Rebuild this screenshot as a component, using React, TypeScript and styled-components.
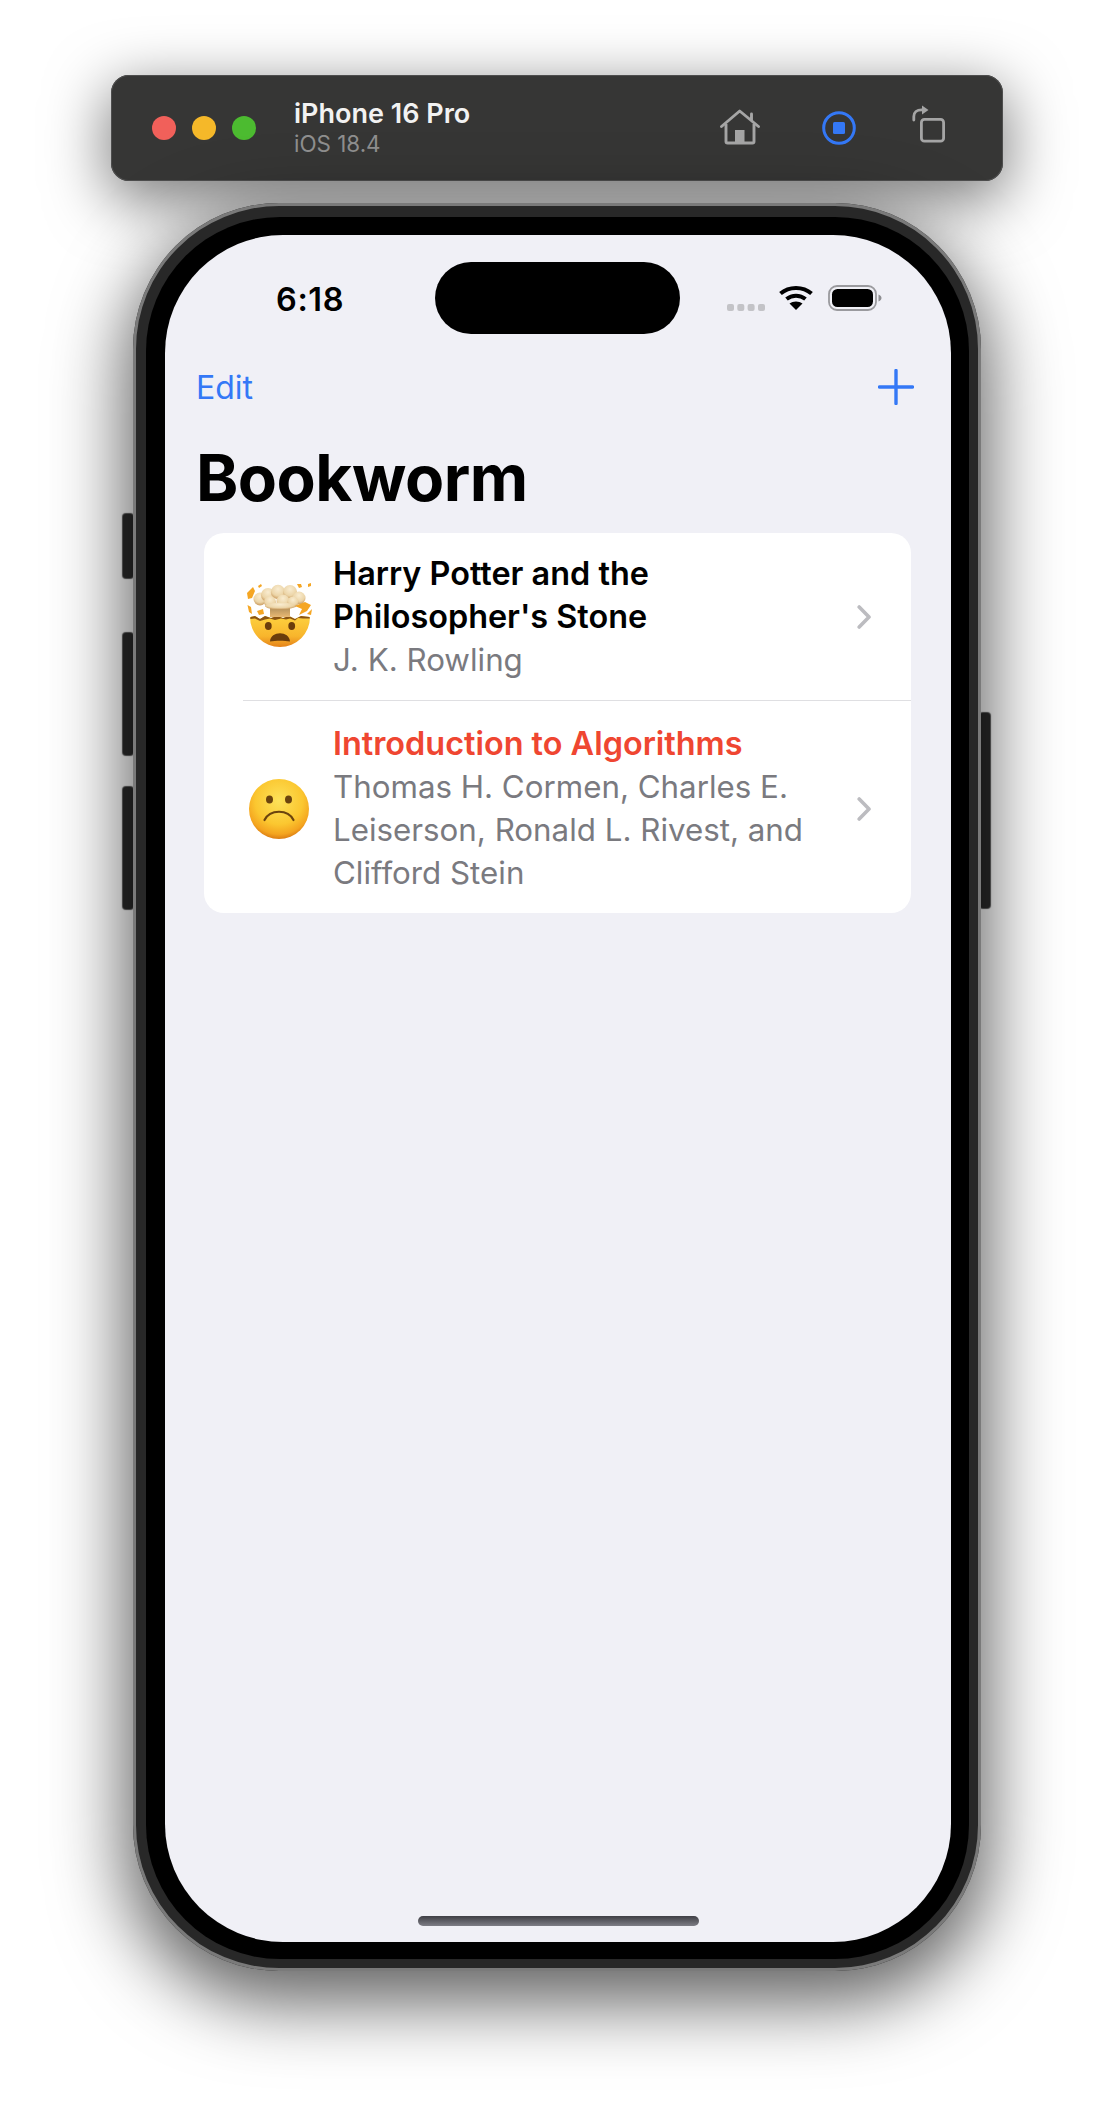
import React from 'react';
import styled, { createGlobalStyle } from 'styled-components';

const Global = createGlobalStyle`
  html, body { margin: 0; padding: 0; background: #fff; }
  body { font-family: Inter, "Liberation Sans", sans-serif; -webkit-font-smoothing: antialiased; }
  #root { width: 1114px; height: 2124px; overflow: hidden; }
`;

const Page = styled.div`
  width: 1114px;
  height: 2124px;
  padding-top: 75px;
  box-sizing: border-box;
  overflow: hidden;
`;

const Toolbar = styled.div`
  margin-left: 111px;
  width: 892px;
  height: 106px;
  box-sizing: border-box;
  padding: 0 58px 0 41px;
  background: #363635;
  border-radius: 18px;
  box-shadow: inset 0 0 0 1px #4e4e4e, 0 16px 60px 4px rgba(0, 0, 0, 0.5);
  display: flex;
  align-items: center;
`;

const Lights = styled.div`
  display: flex;
  gap: 16px;
`;

const Light = styled.span<{ $c: string }>`
  width: 24px;
  height: 24px;
  border-radius: 50%;
  background: ${(p) => p.$c};
`;

const DeviceInfo = styled.div`
  margin-left: 38px;
  display: flex;
  flex-direction: column;
`;

const DeviceName = styled.div`
  font-size: 27px;
  line-height: 32px;
  font-weight: 600;
  color: #f2f2f2;
`;

const DeviceOs = styled.div`
  font-size: 22.400px;
  line-height: 28px;
  color: #8f8f8f;
`;

const ToolIcons = styled.div`
  margin-left: auto;
  display: flex;
  align-items: center;
`;

const ToolSlot = styled.div<{ $gap: number; $shift?: number }>`
  margin-left: ${(p) => p.$gap}px;
  display: flex;
  transform: translateY(${(p) => p.$shift ?? 0}px);
`;

const PhoneArea = styled.div`
  margin: 22px 0 0 133px;
  position: relative;
  width: 848px;
  height: 1768px;
`;

const SideButton = styled.span<{ $top: number; $h: number; $right?: boolean }>`
  position: absolute;
  top: ${(p) => p.$top}px;
  height: ${(p) => p.$h}px;
  width: 10px;
  ${(p) => (p.$right ? 'right: -9px;' : 'left: -10px;')}
  background: #2b2b2b;
  border-radius: 3px;
  box-shadow: 0 0 1px 1px #555;
`;

const Body = styled.div`
  width: 848px;
  height: 1768px;
  box-sizing: border-box;
  padding: 14px 12px 12px 13px;
  border-radius: 146px;
  background: #282828;
  box-shadow: inset 0 0 0 3px #7a7a7a, 0 24px 72px 8px rgba(0, 0, 0, 0.62);
  position: relative;
`;

const Bezel = styled.div`
  width: 823px;
  height: 1742px;
  box-sizing: border-box;
  padding: 18px 18px 17px 19px;
  border-radius: 134px;
  background: #000;
`;

const Screen = styled.div`
  width: 786px;
  height: 1707px;
  border-radius: 118px;
  background: #f0f0f6;
  overflow: hidden;
  position: relative;
  display: flex;
  flex-direction: column;
`;

const StatusBar = styled.div`
  height: 99px;
  flex: none;
  display: flex;
  align-items: flex-end;
  padding-left: 111px;
  padding-right: 69px;
`;

const Time = styled.div`
  font-size: 32.500px;
  line-height: 40px;
  font-weight: 600;
  letter-spacing: 0.6px;
  color: #000;
  margin-bottom: 14px;
`;

const Island = styled.div`
  position: absolute;
  top: 27px;
  left: 270px;
  width: 245px;
  height: 72px;
  border-radius: 36px;
  background: #000;
`;

const StatusIcons = styled.div`
  margin-left: auto;
  display: flex;
  align-items: center;
  margin-bottom: 23px;
`;

const NavBar = styled.div`
  height: 48px;
  margin-top: 29px;
  padding: 0 37px 0 31px;
  display: flex;
  align-items: center;
  justify-content: space-between;
  flex: none;
`;

const EditLink = styled.span`
  font-size: 32px;
  color: #3478f6;
`;

const PageTitle = styled.h1`
  margin: 28px 0 0 31px;
  font-size: 64px;
  line-height: 78px;
  font-weight: 700;
  letter-spacing: -0.5px;
  color: #000;
`;

const Card = styled.div`
  margin: 16px 40px 0 39px;
  background: #fff;
  border-radius: 20px;
  overflow: hidden;
`;

const Row = styled.div<{ $divider?: boolean; $top: number; $bottom: number }>`
  display: flex;
  align-items: center;
  padding: ${(p) => p.$top}px 40px ${(p) => p.$bottom}px 39px;
  position: relative;
  ${(p) =>
    p.$divider
      ? `&::after { content: ''; position: absolute; left: 39px; right: 0; bottom: 0; height: 1px; background: #dfdfe2; }`
      : ''}
`;

const EmojiSlot = styled.div`
  width: 72px;
  height: 72px;
  flex: none;
  margin-right: 18px;
`;

const RowText = styled.div`
  flex: 1;
  min-width: 0;
`;

const BookTitle = styled.div<{ $bad?: boolean }>`
  font-size: 32.400px;
  line-height: 43px;
  font-weight: 600;
  color: ${(p) => (p.$bad ? '#ef4631' : '#000')};
`;

const BookAuthor = styled.div`
  margin-top: 1px;
  font-size: 31.300px;
  line-height: 43px;
  color: #7a7a7f;
`;

const Chevron = styled.svg`
  width: 14px;
  height: 24px;
  flex: none;
  margin-left: 20px;
`;

const Spacer = styled.div`
  flex: 1;
`;

const HomeIndicator = styled.div`
  width: 281px;
  height: 10px;
  margin: 0 auto 16px;
  border-radius: 5px;
  background: linear-gradient(#3f3f45, #7d7d85);
  flex: none;
`;

const StatusDots = styled.svg`
  width: 38px;
  height: 7px;
  margin: 18px 14px 0 0;
`;

const BatteryIcon = styled.svg`
  width: 54px;
  height: 26px;
  margin-left: 15px;
`;

const HomeIcon = () => (
  <svg width="40" height="36" viewBox="0 0 40 36" fill="none">
    <path d="M1.500 17.500 19.700 2l18.800 15.500M31.500 11V5" stroke="#a5a5a5" strokeWidth="2.900" strokeLinecap="round" strokeLinejoin="round" />
    <path d="M6 15v17.500a1.500 1.500 0 0 0 1.500 1.500h25a1.500 1.500 0 0 0 1.500-1.500V15" stroke="#a5a5a5" strokeWidth="2.900" />
    <rect x="15" y="21" width="9.500" height="14" fill="#a5a5a5" />
  </svg>
);

const RecordIcon = () => (
  <svg width="34" height="34" viewBox="0 0 34 34" fill="none">
    <circle cx="17" cy="17" r="15.300" stroke="#3478f6" strokeWidth="3" />
    <rect x="11" y="11" width="12" height="12" rx="1.500" fill="#3478f6" />
  </svg>
);

const RotateIcon = () => (
  <svg width="33" height="38" viewBox="0 0 33 38" fill="none">
    <rect x="9.400" y="14.400" width="22.200" height="21.800" rx="3" stroke="#a5a5a5" strokeWidth="2.800" />
    <path d="M1.800 15V11.500C1.800 7.500 5 4.800 9.500 4.800H11" stroke="#a5a5a5" strokeWidth="2.800" strokeLinecap="round" />
    <path d="M10 0.500 16.500 5 10 9.500Z" fill="#a5a5a5" />
  </svg>
);

const MindBlown = () => (
  <svg width="72" height="72" viewBox="0 0 72 72">
    <defs>
      <linearGradient id="faceA" x1="0" y1="0" x2="0" y2="1">
        <stop offset="0" stopColor="#fdd13f" />
        <stop offset="0.65" stopColor="#f8b52c" />
        <stop offset="1" stopColor="#e4821a" />
      </linearGradient>
      <radialGradient id="brain" cx="0.5" cy="0.3" r="0.7">
        <stop offset="0" stopColor="#f9ecd0" />
        <stop offset="0.65" stopColor="#ecd5a8" />
        <stop offset="1" stopColor="#c9995c" />
      </radialGradient>
      <linearGradient id="stem" x1="0" y1="0" x2="0" y2="1">
        <stop offset="0" stopColor="#a98a58" />
        <stop offset="1" stopColor="#e8b873" />
      </linearGradient>
    </defs>
    <path d="M7 36 L12 35 L17 38 L22 35 L28 37 L34 35 L40 37 L46 35 L52 38 L58 35 L67 36 A30 30 0 0 1 7 36 Z" fill="url(#faceA)" />
    <path d="M7.500 36 L12 35 L17 38 L22 35 L28 37 L34 35 L40 37 L46 35 L52 38 L58 35 L66.500 36 L66.800 37.500 L60 37.500 L55 37 L52 39.500 L47 37.500 L43 38.500 L38 37.500 L32 39 L27 37.500 L22 38.500 L17 40 L12 37.500 L7.300 38 Z" fill="#8a5414" />
    <ellipse cx="25.300" cy="45" rx="3.400" ry="3.900" fill="#6b3d0c" />
    <ellipse cx="48.700" cy="45" rx="3.400" ry="3.900" fill="#6b3d0c" />
    <path d="M27 60.500 C27.500 49.500 46.500 49.500 47 60.500 C41 59.500 33 59.500 27 60.500Z" fill="#6b3d0c" />
    <rect x="27" y="25" width="20" height="11" fill="url(#stem)" />
    <g fill="url(#brain)">
      <circle cx="17" cy="18" r="6.500" />
      <circle cx="25" cy="14" r="7" />
      <circle cx="35" cy="11" r="7.200" />
      <circle cx="47" cy="11" r="7" />
      <circle cx="56" cy="17" r="6.500" />
      <circle cx="27" cy="21" r="6" />
      <circle cx="40" cy="20" r="6.500" />
      <circle cx="50" cy="21" r="5.500" />
      <ellipse cx="37" cy="25" rx="15" ry="3.500" />
    </g>
    <g fill="#f5a623">
      <path d="M4 12 L10 6 L12 10 L9 17 L5 18Z" />
      <path d="M4.500 24 L8 26 L9 33 L6 31Z" />
      <path d="M52 25 L62 21 L68 24 L64 30 L56 34 L59 28Z" />
      <path d="M64 33 L69 28 L68 34Z" />
      <path d="M15 5 L18 3 L19 5 L16 7Z" />
      <path d="M54 3 L58 3 L59 6 L56 7Z" />
      <path d="M65 3 L68 2 L68 5 L65 6Z" />
      <path d="M14 30 L20 28 L21 33 L16 34Z" />
    </g>
  </svg>
);

const Frown = () => (
  <svg width="72" height="72" viewBox="0 0 72 72">
    <defs>
      <radialGradient id="faceB" cx="0.5" cy="0.36" r="0.66">
        <stop offset="0" stopColor="#fde25a" />
        <stop offset="0.6" stopColor="#fbc730" />
        <stop offset="0.85" stopColor="#f4a41f" />
        <stop offset="1" stopColor="#d5730f" />
      </radialGradient>
    </defs>
    <circle cx="36" cy="36" r="30" fill="url(#faceB)" />
    <ellipse cx="26.500" cy="26.500" rx="3.500" ry="4" fill="#6b430e" />
    <ellipse cx="45.500" cy="26.500" rx="3.500" ry="4" fill="#6b430e" />
    <path d="M21.500 47 C27 36 45 36 50.500 47" fill="none" stroke="#6b430e" strokeWidth="2.200" strokeLinecap="round" />
  </svg>
);

const ChevronIcon = () => (
  <Chevron viewBox="0 0 14 24" fill="none">
    <path d="M2.200 2 12 12 2.200 22" stroke="#bcbcc0" strokeWidth="3.600" strokeLinecap="round" strokeLinejoin="round" />
  </Chevron>
);

export default function App() {
  return (
    <Page>
      <Global />
      <Toolbar>
        <Lights>
          <Light $c="#f1605a" />
          <Light $c="#f5b829" />
          <Light $c="#4cbb30" />
        </Lights>
        <DeviceInfo>
          <DeviceName>iPhone 16 Pro</DeviceName>
          <DeviceOs>iOS 18.4</DeviceOs>
        </DeviceInfo>
        <ToolIcons>
          <ToolSlot $gap={0} $shift={-1}><HomeIcon /></ToolSlot>
          <ToolSlot $gap={62}><RecordIcon /></ToolSlot>
          <ToolSlot $gap={56} $shift={-4}><RotateIcon /></ToolSlot>
        </ToolIcons>
      </Toolbar>
      <PhoneArea>
        <SideButton $top={311} $h={64} />
        <SideButton $top={430} $h={122} />
        <SideButton $top={584} $h={122} />
        <SideButton $right $top={510} $h={195} />
        <Body>
          <Bezel>
            <Screen>
              <StatusBar>
                <Time>6:18</Time>
                <StatusIcons>
                  <StatusDots viewBox="0 0 38 7">
                    <rect x="0" y="0" width="7" height="7" rx="2" fill="#c3c3c7" />
                    <rect x="10.300" y="0" width="7" height="7" rx="2" fill="#c3c3c7" />
                    <rect x="20.600" y="0" width="7" height="7" rx="2" fill="#c3c3c7" />
                    <rect x="31" y="0" width="7" height="7" rx="2" fill="#c3c3c7" />
                  </StatusDots>
                  <svg width="34" height="26" viewBox="0 0 34 26" fill="none">
                    <path d="M1.500 8.500C10 1 24 1 32.500 8.500" stroke="#000" strokeWidth="4" />
                    <path d="M7.500 14c5.500-4.500 13.500-4.500 19 0" stroke="#000" strokeWidth="4" />
                    <path d="M17 25 10.500 18.500c3.500-2.700 9.500-2.700 13 0Z" fill="#000" />
                  </svg>
                  <BatteryIcon viewBox="0 0 54 26" fill="none">
                    <rect x="1" y="1" width="47" height="24" rx="8" stroke="#9a9a9e" strokeWidth="1.800" />
                    <rect x="4" y="4" width="41" height="18" rx="5.500" fill="#000" />
                    <path d="M50.500 9.500c2 .8 3 2 3 3.500s-1 2.700-3 3.500Z" fill="#8e8e92" />
                  </BatteryIcon>
                </StatusIcons>
              </StatusBar>
              <Island />
              <NavBar>
                <EditLink>Edit</EditLink>
                <svg width="36" height="36" viewBox="0 0 36 36" fill="none">
                  <path d="M18 1.500v33M1.500 18h33" stroke="#3478f6" strokeWidth="3.400" strokeLinecap="round" />
                </svg>
              </NavBar>
              <PageTitle>Bookworm</PageTitle>
              <Card>
                <Row $divider $top={19} $bottom={19}>
                  <EmojiSlot><MindBlown /></EmojiSlot>
                  <RowText>
                    <BookTitle>Harry Potter and the Philosopher's Stone</BookTitle>
                    <BookAuthor>J. K. Rowling</BookAuthor>
                  </RowText>
                  <ChevronIcon />
                </Row>
                <Row $top={21} $bottom={18}>
                  <EmojiSlot><Frown /></EmojiSlot>
                  <RowText>
                    <BookTitle $bad>Introduction to Algorithms</BookTitle>
                    <BookAuthor>Thomas H. Cormen, Charles E. Leiserson, Ronald L. Rivest, and Clifford Stein</BookAuthor>
                  </RowText>
                  <ChevronIcon />
                </Row>
              </Card>
              <Spacer />
              <HomeIndicator />
            </Screen>
          </Bezel>
        </Body>
      </PhoneArea>
    </Page>
  );
}
